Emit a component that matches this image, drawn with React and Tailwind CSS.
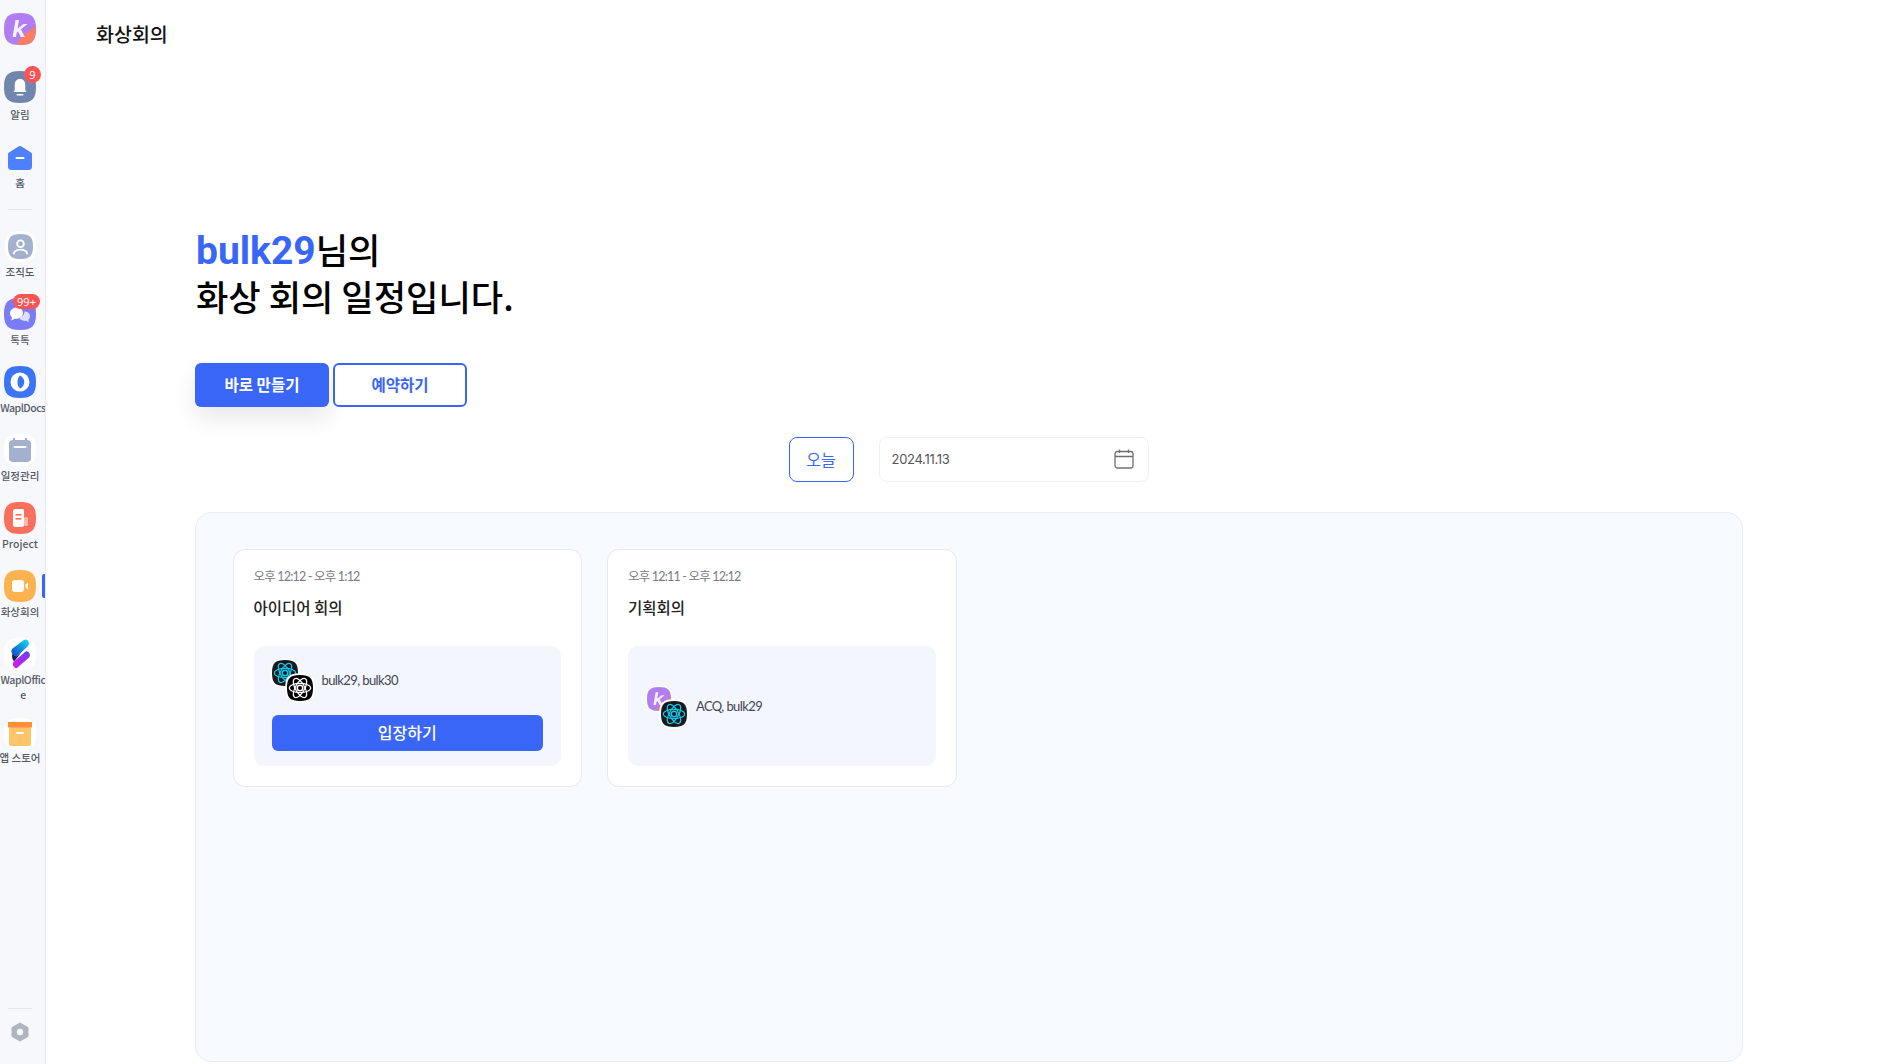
const KR = '"Noto Sans CJK KR", sans-serif'
const LATO = 'Lato, "Noto Sans CJK KR", sans-serif'

const SQ = 'M16 0C28 0 32 4 32 16C32 28 28 32 16 32C4 32 0 28 0 16C0 4 4 0 16 0Z'

function Squircle({ fill, size = 32, white = false, children }) {
  return (
    <svg width={size} height={size} viewBox="0 0 32 32" className="block overflow-visible">
      {white && <path d="M16 -4C30 -4 36 2 36 16C36 30 30 36 16 36C2 36 -4 30 -4 16C-4 2 2 -4 16 -4Z" fill="#fff" />}
      <path d={SQ} fill={fill} />
      {children}
    </svg>
  )
}

function LogoK({ size = 32 }) {
  return (
    <svg width={size} height={size} viewBox="0 0 32 32" className="block">
      <path d={SQ} fill="#b07ef0" />
      <path d="M32 13.500C32 28 28 32 16 32C15 32 14 32 13 31.600C16 24 24 18 32 13.500Z" fill="#fb7d62" />
      <path d="M11.500 7H15L13.600 15.600L19.500 11H23.500L16.900 16.300L20.800 24H16.800L14 18.600L12.800 19.500L12 24H8.600Z" fill="#f6efff" />
    </svg>
  )
}

function Bell() {
  return (
    <Squircle fill="#7186ae">
      <path d="M16 8C12.500 8 10.800 10.500 10.800 14V19L9.500 21H22.500L21.200 19V14C21.200 10.500 19.500 8 16 8Z" fill="#fff" />
      <rect x="12.500" y="23" width="7" height="1.500" rx="0.700" fill="#fff" />
    </Squircle>
  )
}

function HomeIcon() {
  return (
    <svg width="26" height="26" viewBox="0 0 26 26" className="block">
      <path d="M11.500 1.500C12.500 0.800 13.500 0.800 14.500 1.500L24 7.500C25 8.200 25 9 25 10V21C25 24 24 25 21 25H5C2 25 1 24 1 21V10C1 9 1 8.200 2 7.500Z" fill="#4f80fb" />
      <rect x="8.500" y="12" width="9" height="2" rx="1" fill="#fff" />
    </svg>
  )
}

function OrgIcon() {
  return (
    <Squircle fill="#a3b1cf" white size={25}>
      <circle cx="16" cy="12.500" r="4.300" fill="none" stroke="#fff" strokeWidth="2.400" />
      <path d="M7.500 25C8.500 21 12 20 16 20C20 20 23.500 21 24.500 25" fill="none" stroke="#fff" strokeWidth="2.400" strokeLinecap="round" />
    </Squircle>
  )
}

function TalkIcon() {
  return (
    <Squircle fill="#7b7cf5">
      <path d="M13 9.500C8.800 9.500 6 12 6 15.300C6 17 6.800 18.500 8 19.400L7.200 22.500L10.800 20.700C14.800 21.300 19 19 19 15.300C19 12 16.500 9.500 13 9.500Z" fill="#fff" />
      <path d="M20.500 13.500C24 13.500 26 15.800 26 18.300C26 19.700 25.400 21 24.300 21.800L25 24.300L22 22.800C18.500 23.300 15.500 21.500 15 19.300C18 19.300 20.500 16.800 20.500 13.500Z" fill="#dfe0ff" />
    </Squircle>
  )
}

function DocsIcon() {
  return (
    <Squircle fill="#3c74f6">
      <circle cx="16" cy="16" r="9.500" fill="#fff" />
      <path d="M16 9.500C19 11 20.300 13.500 20.300 16C20.300 18.500 19 21 16 22.500C14 20.500 13.500 18.500 13.500 16C13.500 13.500 14 11.500 16 9.500Z" fill="#3c74f6" />
    </Squircle>
  )
}

function CalIcon() {
  return (
    <svg width="32" height="32" viewBox="0 0 32 32" className="block">
      <path d={SQ} fill="#fff" />
      <rect x="5" y="6" width="22" height="22" rx="4" fill="#a3b1cf" />
      <rect x="9" y="4" width="2" height="4" fill="#a3b1cf" />
      <rect x="21" y="4" width="2" height="4" fill="#a3b1cf" />
      <rect x="9.500" y="12" width="13" height="2" rx="1" fill="#fff" />
    </svg>
  )
}

function ProjectIcon() {
  return (
    <Squircle fill="#fb6f5d">
      <path d="M9 9C9 8 10 7 11 7H19L20 8V23C20 24 19 25 18 25H11C10 25 9 24 9 23Z" fill="#fff" />
      <rect x="20" y="15" width="4" height="9" rx="1.500" fill="#ffb9ad" />
      <rect x="11.500" y="12" width="6" height="1.600" fill="#fb6f5d" />
      <rect x="11.500" y="16" width="6" height="1.600" fill="#fb6f5d" />
    </Squircle>
  )
}

function VideoIcon() {
  return (
    <Squircle fill="#fcb24f">
      <rect x="8" y="10" width="12" height="12" rx="3" fill="#fff" />
      <path d="M21.500 14.500L24 12.500V19.500L21.500 17.500Z" fill="#fff" />
    </Squircle>
  )
}

function OfficeIcon() {
  return (
    <svg width="32" height="32" viewBox="0 0 32 32" className="block">
      <defs>
        <linearGradient id="officeTop" x1="0" y1="1" x2="1" y2="0">
          <stop offset="0" stopColor="#1340c8" />
          <stop offset="1" stopColor="#0fe0ef" />
        </linearGradient>
        <linearGradient id="officeBottom" x1="1" y1="0" x2="0" y2="1">
          <stop offset="0" stopColor="#5a44f0" />
          <stop offset="1" stopColor="#e614ea" />
        </linearGradient>
      </defs>
      <path d={SQ} fill="#fff" />
      <path d="M20 2C21.500 0.800 23.500 1.500 24.500 3.500C25.500 5.500 25 7 23.500 8.500L14 17.500C12.500 19 10 18 8.500 16C7 14 7 12 8.500 10.500Z" fill="url(#officeTop)" />
      <path d="M21 14C22.500 12.500 24.500 13.500 25.500 15.500C26.500 17.500 25.500 19 24.500 20L13.500 29.500C12 30.800 10.500 30 9.500 28.300C8.500 26.500 8.500 25 10 23.500Z" fill="url(#officeBottom)" />
      <path d="M8.500 15.500C10 18 12.500 19 14 17.500L17 15L10 23.500C8 21 7.500 18 8.500 15.500Z" fill="#151a5e" />
    </svg>
  )
}

function StoreIcon() {
  return (
    <svg width="32" height="32" viewBox="0 0 32 32" className="block">
      <path d={SQ} fill="#fff" />
      <rect x="5" y="9" width="22" height="19" rx="2" fill="#fdc568" />
      <rect x="4" y="4" width="24" height="5.500" fill="#fe8e3c" />
      <rect x="12" y="14" width="8" height="2" rx="1" fill="#fff" />
    </svg>
  )
}

function Atom({ bg, color, size = 26 }) {
  return (
    <svg width={size} height={size} viewBox="0 0 28 28" className="block overflow-visible">
      <path d="M14 -2C26 -2 30 2 30 14C30 26 26 30 14 30C2 30 -2 26 -2 14C-2 2 2 -2 14 -2Z" fill="#fff" />
      <path d="M14 0C24.500 0 28 3.500 28 14C28 24.500 24.500 28 14 28C3.500 28 0 24.500 0 14C0 3.500 3.500 0 14 0Z" fill={bg} />
      <g fill="none" stroke={color} strokeWidth="1.300">
        <ellipse cx="14" cy="14" rx="11.500" ry="5" />
        <ellipse cx="14" cy="14" rx="11.500" ry="5" transform="rotate(60 14 14)" />
        <ellipse cx="14" cy="14" rx="11.500" ry="5" transform="rotate(120 14 14)" />
      </g>
      <circle cx="14" cy="14" r="3" fill="none" stroke={color} strokeWidth="1.700" />
    </svg>
  )
}

const navItems = [
  { label: '알림', icon: <Bell />, badge: '9', h: 'h-[71px]', text: 'mt-[2px] -mx-[3px]' },
  { label: '홈', icon: <HomeIcon />, h: 'h-[68px]', text: 'mt-[-1px] -mx-[3px]' },
  { label: '조직도', icon: <OrgIcon />, divider: true, h: 'h-[68px]', text: 'mt-0 -mx-[3px]' },
  { label: '톡톡', icon: <TalkIcon />, badge: '99+', h: 'h-[68px]', text: 'mt-0 -mx-[3px]' },
  { label: 'WaplDocs', icon: <DocsIcon />, h: 'h-[68px]', text: 'mt-0 self-start tracking-[-0.5px] whitespace-nowrap' },
  { label: '일정관리', icon: <CalIcon />, h: 'h-[68px]', text: 'mt-0 -mx-[3px]' },
  { label: 'Project', icon: <ProjectIcon />, h: 'h-[68px]', text: 'mt-0 -mx-[3px]' },
  { label: '화상회의', icon: <VideoIcon />, active: true, h: 'h-[68px]', text: 'mt-0 -mx-[3px]' },
  { label: 'WaplOffice', icon: <OfficeIcon />, h: 'h-[80px]', text: 'mt-0 self-start tracking-[-0.4px]' },
  { label: '앱 스토어', icon: <StoreIcon />, h: 'h-[68px]', text: 'mt-[-2px] -mx-[3px]' },
]

function NavItem({ item }) {
  return (
    <div className={`relative w-[40px] flex flex-col items-center ${item.h}`}>
      <div className="relative h-[36px] w-[40px] flex items-center justify-center">
        {item.icon}
        {item.badge === '9' && (
          <span className="absolute top-[-3px] right-[-1px] w-[17px] h-[17px] rounded-full bg-[#fb5454] text-white text-[11px] leading-[17px] text-center">9</span>
        )}
        {item.badge === '99+' && (
          <span className="absolute top-[-2px] right-0 w-[27px] h-[15px] rounded-full bg-[#fb5454] text-white text-[11px] leading-[15px] text-center">99+</span>
        )}
      </div>
      <div
        className={`w-[46px] shrink-0 text-center text-[#555b66] text-[10.500px] leading-[15px] font-medium break-all ${item.text}`}
        style={{ fontFamily: KR }}
      >
        {item.label}
      </div>
      {item.active && <div className="absolute right-[-5px] top-[6px] w-[3px] h-[24px] bg-[#3a66f8] rounded-l-[2px]" />}
    </div>
  )
}

function Sidebar() {
  return (
    <aside className="w-[46px] h-full shrink-0 bg-[#f7f8fb] border-r border-[#e9ebf0] flex flex-col overflow-hidden">
      <div className="h-[69px] pt-[13px] pl-[4px]">
        <LogoK />
      </div>
      {navItems.map(item => (
        <div key={item.label}>
          {item.divider && <div className="w-[24px] h-px bg-[#e3e5ea] ml-[8px] mt-px mb-[18px]" />}
          <NavItem item={item} />
        </div>
      ))}
      <div className="mt-auto pb-[22px]">
        <div className="w-[24px] h-px bg-[#e3e5ea] ml-[8px] mb-[13px]" />
        <svg width="18" height="20" viewBox="0 0 18 20" className="block ml-[11px]">
          <path d="M9 1L17 5.500V14.500L9 19L1 14.500V5.500Z" fill="#b0b4bc" stroke="#b0b4bc" strokeLinejoin="round" />
          <circle cx="9" cy="10" r="3.200" fill="#f4f5f7" />
        </svg>
      </div>
    </aside>
  )
}

function MeetingCard({ time, title, names, avatars, action }) {
  return (
    <div className="w-[349.500px] h-[238px] bg-white border border-[#e6e9f0] rounded-[12px] pt-[17px] px-[20px]">
      <p className="text-[12.500px] leading-[20px] tracking-[-0.8px] text-[#777c85]" style={{ fontFamily: LATO }}>{time}</p>
      <p className="mt-[9px] text-[15.500px] leading-[22px] text-[#222] font-medium" style={{ fontFamily: KR }}>{title}</p>
      <div className={`mt-[28px] h-[120px] bg-[#f3f6fd] rounded-[10px] px-[18px] flex flex-col ${action ? 'pt-[14px]' : 'justify-center'}`}>
        <div className="flex items-center gap-[9px]">
          <div className="relative w-[41px] h-[41px]">
            <div className="absolute left-0 top-0">{avatars[0]}</div>
            <div className="absolute left-[15px] top-[15px]">{avatars[1]}</div>
          </div>
          <span className="mt-px text-[13px] tracking-[-0.6px] text-[#3f4550]" style={{ fontFamily: LATO }}>{names}</span>
        </div>
        {action && (
          <button className="mt-[14px] h-[36px] pb-[2px] w-full bg-[#3a66f8] rounded-[6px] text-white text-[16px] font-medium" style={{ fontFamily: KR }}>
            {action}
          </button>
        )}
      </div>
    </div>
  )
}

export default function App() {
  return (
    <div className="flex h-[1064px] w-full overflow-hidden bg-white">
      <Sidebar />
      <main className="flex-1 min-w-0 flex flex-col">
        <h1 className="mt-[20px] ml-[50px] text-[19.500px] leading-[28px] text-[#111] font-medium" style={{ fontFamily: KR }}>화상회의</h1>

        <div className="ml-[149px] mr-[153px] mt-[177px] flex flex-col flex-1">
          <h2 className="ml-[1px] text-[35.200px] leading-[47px] text-black font-medium" style={{ fontFamily: KR }}>
            <span className="text-[#3a66f8] font-bold text-[39px] leading-[40px]" style={{ fontFamily: 'Roboto, sans-serif' }}>bulk29</span>님의
            <br />
            화상 회의 일정입니다.
          </h2>

          <div className="mt-[44px] flex gap-[4px]">
            <button className="w-[134px] h-[44px] pb-px rounded-[6px] bg-[#3a66f8] text-white text-[15.500px] font-bold shadow-[0_12px_24px_rgba(0,0,0,0.09)]" style={{ fontFamily: KR }}>바로 만들기</button>
            <button className="w-[134px] h-[44px] pb-px rounded-[6px] bg-white border-2 border-[#3a66f8] text-[#3a66f8] text-[15.500px] font-bold" style={{ fontFamily: KR }}>예약하기</button>
          </div>

          <div className="mt-[30px] flex justify-center gap-[25px] pr-[1px]">
            <button className="w-[65px] h-[45px] pb-px rounded-[8px] bg-white border border-[#3a66f8] text-[#3a66f8] text-[16px]" style={{ fontFamily: KR }}>오늘</button>
            <div className="w-[270px] h-[45px] rounded-[8px] bg-white border border-[#eef0f7] pl-[12px] pr-[14px] flex items-center justify-between">
              <span className="text-[13px] text-[#555]" style={{ fontFamily: 'Inter, sans-serif', letterSpacing: '-0.3px' }}>2024.11.13</span>
              <svg width="20" height="20" viewBox="0 0 20 20" fill="none" stroke="#6f6f6f" strokeWidth="1.300" className="mb-[2px]">
                <rect x="1" y="2.500" width="18" height="16.500" rx="2.500" />
                <path d="M1 7.500H19M5.500 0.500V4M14.500 0.500V4" />
              </svg>
            </div>
          </div>

          <section className="mt-[30px] h-[550px] shrink-0 bg-[#f7faff] border border-[#e8edfb] rounded-[16px] pt-[36px] px-[36.500px] flex gap-[25px]">
            <MeetingCard
              time="오후 12:12 - 오후 1:12"
              title="아이디어 회의"
              names="bulk29, bulk30"
              action="입장하기"
              avatars={[<Atom bg="#17191d" color="#12c8e8" />, <Atom bg="#000" color="#fff" />]}
            />
            <MeetingCard
              time="오후 12:11 - 오후 12:12"
              title="기획회의"
              names="ACQ, bulk29"
              avatars={[
                <div className="rounded-[9px] bg-white p-[1px]"><LogoK size={24} /></div>,
                <Atom bg="#17191d" color="#12c8e8" />,
              ]}
            />
          </section>
        </div>
      </main>
    </div>
  )
}
